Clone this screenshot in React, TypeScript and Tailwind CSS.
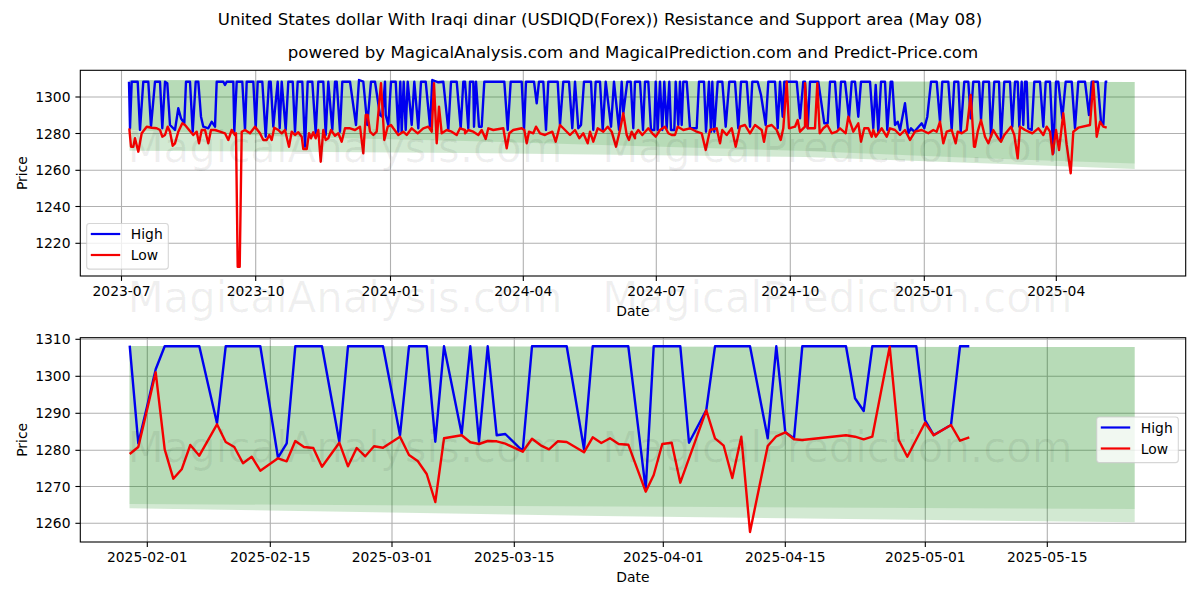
// USDIQD resistance / support figure
type Strip = [number, number, number[]]

// traced from the figure: [left x, top y, x/y pairs at 3x]
const topHigh: Strip[] = [
  [125, 75, [12,20, 15,160, 20,20, 38,20, 45,165, 55,20, 70,20, 78,155, 90,20, 105,20, 112,160, 120,20, 127,25, 135,150, 150,165, 160,100, 168,130, 178,145, 183,20, 195,20, 203,170, 212,20, 220,20, 228,125, 235,155, 250,160, 260,140, 270,155, 275,20, 295,20, 300,30, 305,20, 325,20, 328,170, 335,20, 352,20, 360,165, 365,20, 385,20, 392,160, 398,20, 412,20, 422,185, 432,20, 437,20, 445,155, 458,20, 464,160, 470,20, 482,165, 490,20, 503,20, 510,170]],
  [295, 75, [8,20, 22,20, 30,215, 38,20, 52,20, 62,175, 70,20, 85,20, 92,180, 100,20, 112,165, 120,20, 125,20, 135,170, 142,20, 165,20, 183,150, 192,15, 205,20, 217,150, 228,20, 240,20, 255,120, 262,125, 270,20, 272,120, 280,150, 288,20, 302,20, 310,170, 316,20, 320,170, 326,20, 332,165, 338,20, 350,150, 358,20, 370,160, 378,20, 392,20, 405,155, 412,15, 430,22, 445,20, 460,165, 468,20, 485,20, 497,160, 505,20]],
  [465, 75, [0,20, 10,160, 15,20, 25,20, 27,155, 33,20, 42,155, 50,155, 58,20, 118,20, 128,165, 137,20, 143,20, 170,20, 177,165, 183,20, 207,20, 215,85, 222,20, 235,20, 243,165, 250,20, 278,20, 285,150, 295,20, 312,20, 322,160, 330,20, 340,160, 348,150, 357,20, 378,20, 385,165, 392,20, 405,20, 413,165, 422,20, 438,155, 447,20, 462,165, 470,20, 475,115, 487,20, 497,20, 505,160, 510,20]],
  [635, 75, [0,20, 15,20, 24,165, 30,20, 40,20, 48,165, 58,165, 62,20, 68,165, 75,20, 82,165, 88,20, 95,160, 103,20, 108,165, 118,165, 122,20, 130,150, 135,20, 140,150, 145,20, 155,20, 165,160, 185,160, 192,20, 207,20, 213,170, 222,20, 228,170, 232,20, 238,170, 248,20, 262,20, 272,155, 283,20, 300,20, 310,160, 318,20, 335,20, 345,155, 352,20, 368,20, 378,60, 392,150, 400,20, 420,20, 428,160, 435,20, 443,125, 448,20, 485,20, 495,130, 505,20]],
  [805, 75, [0,20, 8,160, 15,20, 40,20, 58,145, 68,145, 75,20, 90,20, 100,160, 108,20, 120,20, 132,130, 140,20, 150,20, 160,125, 168,20, 195,20, 205,160, 212,30, 220,170, 228,20, 240,20, 247,165, 257,20, 262,20, 270,150, 278,140, 285,165, 300,85, 310,175, 318,160, 328,170, 350,145, 358,160, 367,125, 378,20, 395,20, 405,140, 412,20, 430,20, 440,165, 448,20, 460,20, 467,170, 478,20, 490,20, 497,130, 505,20]],
  [975, 75, [5,20, 12,20, 18,135, 25,20, 42,20, 48,185, 58,20, 72,20, 78,195, 88,20, 105,20, 112,155, 120,20, 128,20, 133,155, 140,20, 145,150, 150,20, 155,20, 160,160, 170,165, 178,20, 195,20, 205,155, 212,20, 225,20, 235,235, 243,20, 250,20, 262,130, 272,20, 290,20, 300,160, 310,20, 330,20, 342,120, 350,20, 368,20, 378,140, 385,150, 392,20, 397,20]],
]

const topLow: Strip[] = [
  [125, 75, [13,160, 18,215, 25,215, 30,190, 40,230, 50,175, 65,155, 80,158, 95,160, 105,165, 112,185, 120,180, 128,155, 135,170, 143,212, 150,205, 160,170, 172,145, 180,150, 190,162, 205,180, 215,170, 222,205, 230,165, 240,165, 250,205, 258,165, 270,165, 285,170, 300,175, 310,195, 320,165, 330,180, 333,175, 338,575, 344,575, 350,170, 360,165, 375,175, 390,155, 405,175, 415,195, 425,195, 433,180, 440,195, 448,158, 460,165, 470,175, 480,165, 492,215, 500,170, 510,180]],
  [295, 75, [10,172, 20,185, 25,222, 35,222, 42,175, 48,190, 55,172, 62,190, 70,165, 77,260, 85,165, 92,195, 100,190, 108,165, 120,182, 130,175, 140,200, 150,160, 165,160, 180,165, 195,155, 205,235, 212,120, 218,120, 225,170, 235,180, 245,170, 258,25, 268,195, 278,155, 288,150, 295,160, 310,180, 325,170, 335,180, 350,160, 368,175, 385,160, 400,155, 410,170, 417,25, 425,205, 432,95, 440,175, 455,165, 470,170, 485,180, 495,160, 510,165]],
  [465, 75, [0,175, 10,165, 25,170, 40,180, 50,165, 62,192, 70,160, 85,165, 115,160, 125,220, 133,175, 145,165, 170,160, 178,165, 185,205, 192,170, 205,175, 213,155, 225,175, 240,180, 250,175, 262,170, 272,200, 285,150, 300,165, 315,180, 330,165, 343,190, 355,175, 368,205, 375,170, 385,200, 398,160, 415,170, 428,155, 440,170, 453,215, 465,165, 475,115, 485,180, 492,195, 500,170, 510,190]],
  [635, 75, [0,180, 10,165, 22,180, 40,160, 52,175, 62,185, 75,165, 90,155, 100,175, 110,180, 120,180, 128,155, 145,165, 165,160, 185,170, 200,175, 212,225, 225,165, 245,160, 255,205, 262,165, 275,180, 290,160, 302,215, 315,155, 330,150, 345,175, 360,150, 380,165, 387,200, 395,155, 410,150, 425,165, 437,195, 445,160, 455,20, 462,160, 480,155, 488,135, 495,170, 510,155]],
  [805, 75, [0,25, 8,160, 30,160, 37,25, 44,175, 55,160, 67,150, 80,175, 95,170, 105,160, 122,175, 130,125, 145,170, 160,145, 168,200, 178,160, 190,160, 200,185, 205,165, 212,185, 230,160, 245,185, 255,160, 270,165, 285,180, 300,165, 315,195, 330,170, 350,165, 370,175, 385,165, 395,170, 405,140, 415,205, 425,170, 440,165, 452,205, 458,170, 470,175, 485,165, 497,60, 507,215]],
  [975, 75, [0,215, 8,170, 18,135, 30,185, 40,205, 55,165, 70,190, 78,200, 88,180, 108,155, 118,180, 128,250, 135,155, 150,165, 172,175, 190,160, 205,180, 215,155, 225,170, 233,238, 243,165, 252,225, 265,115, 275,210, 287,295, 295,170, 310,158, 345,150, 355,20, 365,185, 375,140, 385,155, 395,158]],
]

const bottomHigh: Strip[] = [
  [0, 330, [389,47, 415,340, 441,230, 467,118, 494,49, 598,49, 651,280, 677,49, 781,49, 834,383, 860,340, 886,49, 966,49, 1018,335, 1044,49, 1149,49, 1200,316]],
  [400, 330, [27,49, 80,49, 106,335, 132,49, 185,312, 211,49, 237,335, 263,49, 290,316, 316,312, 368,363, 396,49, 500,49, 552,358, 578,49, 685,49, 737,478, 761,49, 841,49, 867,338, 919,240, 945,49, 1050,49, 1103,325, 1129,49, 1156,307, 1182,325]],
  [800, 330, [7,49, 138,49, 165,205, 191,243, 217,49, 349,49, 375,270, 401,315, 453,285, 480,49, 508,49]],
]

const bottomLow: Strip[] = [
  [0, 330, [389,372, 415,351, 441,240, 467,127, 494,358, 520,446, 545,418, 571,345, 598,377, 651,283, 677,336, 703,351, 729,400, 755,380, 781,422, 834,385, 860,394, 886,333, 912,351, 940,354, 966,410, 1018,338, 1044,409, 1070,354, 1096,379, 1122,349, 1149,353, 1200,320]],
  [400, 330, [27,375, 53,393, 80,432, 106,516, 132,325, 185,316, 211,337, 237,342, 263,333, 290,334, 316,341, 368,365, 396,326, 422,346, 447,358, 473,334, 500,336, 552,367, 578,322, 604,339, 630,325, 656,342, 685,344, 737,485, 761,435, 787,342, 815,338, 841,458, 919,241, 945,325, 971,347, 997,444, 1024,320, 1050,606, 1103,348, 1129,319, 1156,307, 1182,328]],
  [800, 330, [7,330, 138,316, 165,320, 191,328, 217,320, 269,50, 296,330, 322,380, 375,278, 401,316, 453,285, 480,332, 508,322]],
]

function toPoints(strips: Strip[]) {
  const out: string[] = []
  for (const [left, top, flat] of strips) {
    for (let i = 0; i < flat.length; i += 2) {
      out.push(`${(left + flat[i] / 3).toFixed(1)},${(top + flat[i + 1] / 3).toFixed(1)}`)
    }
  }
  return out.join(" ")
}

type Tick = { at: number; label: string }

const AXIS_L = 80.3
const AXIS_R = 1185.7

function Chart({
  viewTop,
  height,
  top,
  bottom,
  xTicks,
  yTicks,
  bandLight,
  bandDark,
  high,
  low,
  legend,
}: {
  viewTop: number
  height: number
  top: number
  bottom: number
  xTicks: Tick[]
  yTicks: Tick[]
  bandLight: string
  bandDark: string
  high: string
  low: string
  legend: { x: number; y: number }
}) {
  return (
    <svg
      className="block w-[1200px] text-[13.89px]"
      style={{ height }}
      viewBox={`0 ${viewTop} 1200 ${height}`}
    >
      {xTicks.map((t) => (
        <g key={t.label}>
          <line x1={t.at} x2={t.at} y1={top} y2={bottom} stroke="#b0b0b0" strokeWidth="1.1" />
          <line x1={t.at} x2={t.at} y1={bottom} y2={bottom + 4.9} stroke="#000" strokeWidth="1.1" />
          <text x={t.at} y={bottom + 20} textAnchor="middle">{t.label}</text>
        </g>
      ))}
      {yTicks.map((t) => (
        <g key={t.label}>
          <line x1={AXIS_L} x2={AXIS_R} y1={t.at} y2={t.at} stroke="#b0b0b0" strokeWidth="1.1" />
          <line x1={AXIS_L - 4.9} x2={AXIS_L} y1={t.at} y2={t.at} stroke="#000" strokeWidth="1.1" />
          <text x={70.5} y={t.at + 5} textAnchor="end">{t.label}</text>
        </g>
      ))}
      <polygon points={bandLight} fill="#008000" fillOpacity="0.176" />
      <polygon points={bandDark} fill="#008000" fillOpacity="0.124" />
      <polyline points={high} fill="none" stroke="#0000f0" strokeWidth="2.4" strokeLinejoin="round" />
      <polyline points={low} fill="none" stroke="#f50000" strokeWidth="2.4" strokeLinejoin="round" />
      <rect x={AXIS_L} y={top} width={AXIS_R - AXIS_L} height={bottom - top} fill="none" stroke="#000" strokeWidth="1.1" />
      <text x={632.9} y={bottom + 40} textAnchor="middle">Date</text>
      <text
        textAnchor="middle"
        transform={`translate(27 ${(top + bottom) / 2}) rotate(-90)`}
      >
        Price
      </text>
      <g transform={`translate(${legend.x} ${legend.y})`}>
        <rect x="0.5" y="0.5" width="81.6" height="45.6" rx="2.8" fill="#fff" fillOpacity="0.8" stroke="#cccccc" strokeOpacity="0.8" strokeWidth="1.1" />
        <line x1="4.6" x2="34" y1="11" y2="11" stroke="#0000f0" strokeWidth="2.2" />
        <line x1="4.6" x2="34" y1="32" y2="32" stroke="#f50000" strokeWidth="2.2" />
        <text x="44.6" y="16">High</text>
        <text x="44.6" y="37">Low</text>
      </g>
    </svg>
  )
}

const WATERMARK = "MagicalAnalysis.com   MagicalPrediction.com"

export default function App() {
  return (
    <div className="relative h-[600px] w-[1200px] overflow-hidden bg-white font-['DejaVu_Sans',sans-serif] text-black">
      <div className="flex h-[35px] items-end justify-center text-[16.62px] leading-[30px]">
        United States dollar With Iraqi dinar (USDIQD(Forex)) Resistance and Support area (May 08)
      </div>
      <div className="flex h-[30px] items-end justify-center pl-[66px] text-[16.62px] leading-[25px]">
        powered by MagicalAnalysis.com and MagicalPrediction.com and Predict-Price.com
      </div>
      <Chart
        viewTop={65}
        height={260}
        top={70.3}
        bottom={276}
        xTicks={[
          { at: 121.5, label: "2023-07" },
          { at: 255.7, label: "2023-10" },
          { at: 390.5, label: "2024-01" },
          { at: 523.3, label: "2024-04" },
          { at: 656.3, label: "2024-07" },
          { at: 790.3, label: "2024-10" },
          { at: 924.3, label: "2025-01" },
          { at: 1056.3, label: "2025-04" },
        ]}
        yTicks={[
          { at: 97, label: "1300" },
          { at: 133.5, label: "1280" },
          { at: 170.3, label: "1260" },
          { at: 206.5, label: "1240" },
          { at: 243.3, label: "1220" },
        ]}
        bandLight="129.5,80 1134.7,82 1134.7,169 975,163 805,157 635,155 465,153 129.5,150.7"
        bandDark="129.5,80 1134.7,82 1134.7,163.5 975,158 805,151 635,146 465,141 295,137 129.5,130"
        high={toPoints(topHigh)}
        low={toPoints(topLow)}
        legend={{ x: 86.2, y: 223 }}
      />
      <Chart
        viewTop={325}
        height={275}
        top={337.7}
        bottom={542}
        xTicks={[
          { at: 147.3, label: "2025-02-01" },
          { at: 270.3, label: "2025-02-15" },
          { at: 392, label: "2025-03-01" },
          { at: 514.3, label: "2025-03-15" },
          { at: 663.3, label: "2025-04-01" },
          { at: 785.3, label: "2025-04-15" },
          { at: 925.3, label: "2025-05-01" },
          { at: 1047.3, label: "2025-05-15" },
        ]}
        yTicks={[
          { at: 339.3, label: "1310" },
          { at: 376.3, label: "1300" },
          { at: 413.3, label: "1290" },
          { at: 450.3, label: "1280" },
          { at: 486.5, label: "1270" },
          { at: 523.3, label: "1260" },
        ]}
        bandLight="129.5,346 1134.7,347 1134.7,522.3 600,516 129.5,508.3"
        bandDark="129.5,346 1134.7,347 1134.7,509 129.5,504"
        high={toPoints(bottomHigh)}
        low={toPoints(bottomLow)}
        legend={{ x: 1096.2, y: 416.5 }}
      />
      {/* watermark sits over the whole figure */}
      <div className="pointer-events-none absolute inset-0 flex flex-col items-center text-[41.8px] leading-[50px] whitespace-pre text-black/[0.06]">
        <div className="mt-[123px]">{WATERMARK}</div>
        <div className="mt-[100px]">{WATERMARK}</div>
        <div className="mt-[100px]">{WATERMARK}</div>
      </div>
    </div>
  )
}
